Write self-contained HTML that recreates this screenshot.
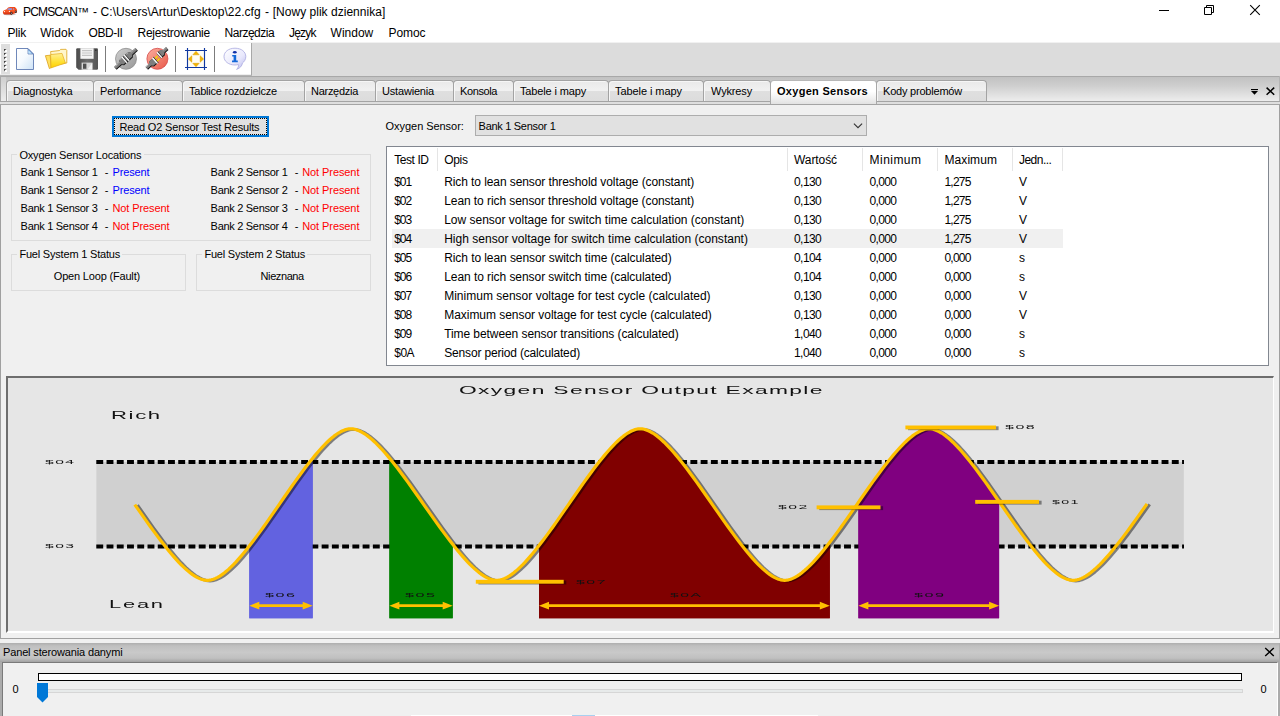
<!DOCTYPE html>
<html><head><meta charset="utf-8">
<style>
*{box-sizing:border-box;margin:0;padding:0}
html,body{width:1280px;height:716px;overflow:hidden;background:#f0f0f0}
body{font-family:"Liberation Sans",sans-serif;font-size:12px;color:#000;position:relative}
.a{position:absolute}
.t{position:absolute;white-space:pre;line-height:16px;height:16px;z-index:3}
.c{color:#111;filter:grayscale(1)}
#title{left:0;top:0;width:1280px;height:22px;background:#fff}
#menu{left:0;top:22px;width:1280px;height:21px;background:#fff}
#tbar{left:0;top:43px;width:1280px;height:33px;background:#dcdcdc}
#tbarw{left:0;top:74.5px;width:252px;height:2px;background:#b4b4b4}
#tabs{left:0;top:76px;width:1280px;height:26px;background:linear-gradient(#a8a8a8 0,#a8a8a8 1px,#c2c2c2 1.5px,#cdcdcd 35%,#efefef 100%)}
.tab{position:absolute;top:80px;height:21px;border:1px solid #a3a3a3;border-bottom:none;border-radius:4px 4px 0 0;background:linear-gradient(#e9e9e9 0,#f1f1f1 48%,#dfdfdf 52%,#dcdcdc 100%);box-shadow:inset 1px 1px 0 #f6f6f6}
.tab.on{top:80px;height:24px;background:linear-gradient(#fff 0,#fff 45%,#f0f0f0 75%,#e2e2e2 100%);border-color:#a8a8a8;border-top-color:#b8b8b8;box-shadow:none;z-index:2}
.hs{top:148px;width:1px;height:23px;background:#e5e5e5}
.grp{position:absolute;border:1px solid #dcdcdc}
</style></head><body>
<!-- title bar -->
<div id="title" class="a"></div>
<svg class="a" style="left:0;top:0" width="22" height="20" viewBox="0 0 22 20">
 <defs><linearGradient id="gcar" x1="0" y1="0" x2="0" y2="1"><stop offset="0" stop-color="#f04818"/><stop offset=".55" stop-color="#f85a28"/><stop offset="1" stop-color="#d02808"/></linearGradient></defs>
 <ellipse cx="9.5" cy="14.5" rx="6.4" ry=".7" fill="#888" opacity=".5"/>
 <path d="M2.9 11.8 C3.1 10.5 5 9.7 6.6 9.3 L8.1 7.4 C9.8 6.9 13.3 6.8 14.8 7.1 C16 7.9 16.9 9 17.1 10.1 L17 12.3 L15.2 13.2 L11.2 14.6 L4.4 14.4 C3.3 14.2 2.8 13.2 2.9 11.8 Z" fill="url(#gcar)"/>
 <path d="M7.1 9.7 L8.4 8.2 L12 8.2 L11.8 9.9 Z" fill="#8a9cf0"/>
 <path d="M13.1 8.2 L14 8.3 L14.2 9.8 L13.2 9.9 Z" fill="#8a9cf0"/>
 <circle cx="4.5" cy="11.6" r=".55" fill="#fff"/><circle cx="9.4" cy="11.4" r=".55" fill="#fff"/>
 <ellipse cx="11.4" cy="13.3" rx="1.05" ry="1.45" fill="#2a1a1a"/><ellipse cx="11.5" cy="13.3" rx=".4" ry=".7" fill="#c8c8c8"/>
 <ellipse cx="15.8" cy="11.7" rx=".95" ry="1.3" fill="#2a1a1a"/><ellipse cx="15.85" cy="11.7" rx=".35" ry=".6" fill="#c8c8c8"/>
</svg>
<!-- window controls -->
<svg class="a" style="left:1150px;top:0" width="130" height="22" viewBox="0 0 130 22">
 <path d="M9 10.5 H19" stroke="#000" stroke-width="1"/>
 <path d="M54.5 7.5 h7 v7 h-7 Z M56.5 7.5 v-2 h7 v7 h-2" fill="none" stroke="#000" stroke-width="1"/>
 <path d="M100.2 5.2 L109.8 14.8 M109.8 5.2 L100.2 14.8" stroke="#000" stroke-width="1.1"/>
</svg>
<div id="menu" class="a"></div>
<div class="a" style="left:0;top:42px;width:1280px;height:1px;background:#f1f1f1"></div>
<!-- toolbar -->
<div id="tbar" class="a"></div>
<div id="tbarw" class="a"></div>
<svg class="a" style="left:0;top:43px" width="253" height="33" viewBox="0 43 253 33">
<defs>
 <linearGradient id="gdoc" x1="0" y1="0" x2="1" y2="1"><stop offset="0" stop-color="#fff"/><stop offset=".45" stop-color="#f6fafe"/><stop offset="1" stop-color="#cde2f6"/></linearGradient>
 <linearGradient id="gfold" x1="0" y1="0" x2="0" y2="1"><stop offset="0" stop-color="#fff098"/><stop offset=".6" stop-color="#ffe030"/><stop offset="1" stop-color="#ffd000"/></linearGradient>
 <linearGradient id="gfold2" x1="0" y1="0" x2="0" y2="1"><stop offset="0" stop-color="#fdf0b0"/><stop offset="1" stop-color="#ecc040"/></linearGradient>
 <linearGradient id="gflop" x1="0" y1="0" x2="1" y2="0"><stop offset="0" stop-color="#4a4a4a"/><stop offset=".5" stop-color="#6e6e6e"/><stop offset="1" stop-color="#555"/></linearGradient>
 <linearGradient id="ggray" x1="0" y1="0" x2="1" y2="1"><stop offset="0" stop-color="#d0d0d0"/><stop offset="1" stop-color="#969696"/></linearGradient>
 <linearGradient id="gred" x1="0" y1="0" x2="1" y2="1"><stop offset="0" stop-color="#fcb0a0"/><stop offset="1" stop-color="#e85848"/></linearGradient>
 <linearGradient id="gbub" x1="0" y1="0" x2="1" y2="1"><stop offset="0" stop-color="#fff"/><stop offset=".6" stop-color="#e8e8fc"/><stop offset="1" stop-color="#b8b8ec"/></linearGradient>
</defs>
<rect x="0" y="43" width="251" height="31.5" fill="#fff"/>
<rect x="251" y="43" width="1" height="32" fill="#a8a8a8"/>
<rect x="1" y="44" width="9" height="30.3" fill="#dedede"/>
<rect x="5" y="50" width="2" height="2" fill="#fff"/><path d="M4 49 H6.3 L4 51.3 Z" fill="#3c3c3c"/><rect x="5" y="54" width="2" height="2" fill="#fff"/><path d="M4 53 H6.3 L4 55.3 Z" fill="#3c3c3c"/><rect x="5" y="58" width="2" height="2" fill="#fff"/><path d="M4 57 H6.3 L4 59.3 Z" fill="#3c3c3c"/><rect x="5" y="62" width="2" height="2" fill="#fff"/><path d="M4 61 H6.3 L4 63.3 Z" fill="#3c3c3c"/><rect x="5" y="66" width="2" height="2" fill="#fff"/><path d="M4 65 H6.3 L4 67.3 Z" fill="#3c3c3c"/><rect x="5" y="70" width="2" height="2" fill="#fff"/><path d="M4 69 H6.3 L4 71.3 Z" fill="#3c3c3c"/>
<!-- new doc -->
<path d="M16.5 48.5 H28 L33.5 54 V69.5 H16.5 Z" fill="url(#gdoc)" stroke="#5f7ab2" stroke-width=".9" stroke-linejoin="miter"/>
<path d="M28 48.8 V54 H33.2 Z" fill="#8cc4f0" stroke="#5a74ac" stroke-width=".7"/>
<path d="M28.4 50.4 V53.6 H31.6 Z" fill="#c8e4fa"/>
<!-- folder -->
<path d="M50.6 51.6 L59.6 50.5 L60.6 49.4 L66 49.3 L66.8 50.2 L66.8 63 L52 66 Z" fill="#fff6cc" stroke="#dca41c" stroke-width=".8" stroke-linejoin="round"/>
<path d="M45.4 55.7 L50.2 55.2 L51.2 67.6 L49.4 68.6 Z" fill="#ffe060" stroke="#dca018" stroke-width=".8" stroke-linejoin="round"/>
<path d="M50.6 54.6 L62 53.4 L65.4 63 L51 67.9 Z" fill="url(#gfold)" stroke="#e4ac20" stroke-width=".7" stroke-linejoin="round"/>
<!-- floppy -->
<path d="M77.4 48.2 H96.8 Q98 48.2 98 49.4 V68.6 Q98 69.8 96.8 69.8 H78.6 L76.2 67.4 V49.4 Q76.2 48.2 77.4 48.2 Z" fill="url(#gflop)"/>
<rect x="80.4" y="48.2" width="13.2" height="10.6" fill="#f4f4f4"/>
<path d="M82 50.6h10M82 53h10M82 55.4h10" stroke="#c4c4c4" stroke-width="1.1"/>
<rect x="81.6" y="62.6" width="10.8" height="7.2" fill="#d8d8d8"/>
<rect x="83" y="63.6" width="3.4" height="5.2" fill="#505050"/>
<path d="M87.4 69.8 L92.4 62.6 V69.8 Z" fill="#fff" opacity=".7"/>
<rect x="95" y="49.4" width="1.6" height="1.6" fill="#333"/>
<!-- separators -->
<rect x="105" y="46" width="1" height="26" fill="#7c7c7c"/>
<rect x="175" y="46" width="1" height="26" fill="#7c7c7c"/>
<rect x="214" y="46" width="1" height="26" fill="#7c7c7c"/>
<!-- gray plug -->
<circle cx="126" cy="58.8" r="10.5" fill="url(#ggray)" stroke="#8c8c8c" stroke-width=".8"/>
<g transform="translate(126 58.8) rotate(-41.5)">
 <path d="M-14.2 -1.7 H-7.2 L-5.6 -3.3 H6 L7.6 -1.7 H14.2 V1.9 H7.6 L6 3.5 H-5.6 L-7.2 1.9 H-14.2 Z" fill="#141414"/>
 <path d="M-14.2 -1.9 H-7.2 L-5.6 -3.5 H6 L7.6 -1.9 H14.2 V0.9 H7.6 L6 2.5 H-5.6 L-7.2 0.9 H-14.2 Z" fill="#7e7e7e"/>
 <path d="M-14 -1.5 H-7.4 M7.8 -1.5 H14" stroke="#d4d4d4" stroke-width=".8" stroke-dasharray="1.2 .7"/>
 <path d="M-5.2 -3 H-3 M3 -3 H5.6" stroke="#b4b4b4" stroke-width=".7"/>
 <rect x="-2.5" y="-4" width="1.35" height="7.6" fill="#fff"/>
 <rect x="0.5" y="-4" width="1.35" height="7.6" fill="#fff"/>
 <rect x="-1.15" y="-4" width=".6" height="7.8" fill="#222"/><rect x="1.85" y="-4" width=".6" height="7.8" fill="#222"/>
</g>
<!-- red plug -->
<circle cx="157.4" cy="58.8" r="10.5" fill="url(#gred)" stroke="#d44848" stroke-width=".8"/>
<g transform="translate(157.4 58.8) rotate(-41.5)">
 <path d="M-14.2 -1.7 H-9.2 L-7.6 -3.3 H-2 V3.5 H-7.6 L-9.2 1.9 H-14.2 Z" fill="#141414"/>
 <path d="M-14.2 -1.9 H-9.2 L-7.6 -3.5 H-2 V2.5 H-7.6 L-9.2 0.9 H-14.2 Z" fill="#7e7e7e"/>
 <path d="M-14 -1.5 H-9.4" stroke="#d4d4d4" stroke-width=".8" stroke-dasharray="1.2 .7"/>
 <rect x="-3.6" y="-4" width="1.4" height="7.6" fill="#fff"/><rect x="-2.2" y="-4" width=".6" height="7.8" fill="#222"/>
 <path d="M-1.4 -2.3 L1.8 -2.7 L1.8 -1.3 L-1.4 -0.9 Z M-1.4 0.9 L1.8 0.5 L1.8 1.9 L-1.4 2.3 Z" fill="#fff000" stroke="#b89000" stroke-width=".3"/>
 <g transform="translate(0 -1.2)">
 <path d="M3 -3.3 H8 L9.6 -1.7 H14.2 V1.9 H9.6 L8 3.5 H3 Z" fill="#141414"/>
 <path d="M3 -3.5 H8 L9.6 -1.9 H14.2 V0.9 H9.6 L8 2.5 H3 Z" fill="#7e7e7e"/>
 <path d="M9.8 -1.5 H14" stroke="#d4d4d4" stroke-width=".8" stroke-dasharray="1.2 .7"/>
 <rect x="3.4" y="-4" width="1.4" height="7.6" fill="#fff"/><rect x="4.8" y="-4" width=".6" height="7.8" fill="#222"/>
 </g>
</g>
<!-- fit -->
<rect x="188" y="51" width="16" height="16" fill="#fffdf4"/>
<path d="M185 50.5 H207 M185 67.5 H207 M187.5 48 V70 M204.5 48 V70" stroke="#1038a0" stroke-width="1.15" fill="none"/>
<g fill="#f4b400" stroke="#d49a00" stroke-width=".5" stroke-linejoin="round"><path d="M196 51.3 L199.2 54.8 H192.8 Z"/><path d="M196 66.8 L199.2 63.3 H192.8 Z"/><path d="M188.4 59 L191.8 55.8 V62.2 Z"/><path d="M203.6 59 L200.2 55.8 V62.2 Z"/></g>
<!-- info bubble -->
<path d="M235 48.2 C241.4 48.2 245.8 51.8 245.8 56.6 C245.8 59.6 244.2 61.6 242.4 63.2 C242 65.8 240.2 68.2 236.6 69.4 C238.2 67.8 238.8 66.2 238.4 64.6 C237.4 64.8 236.2 65 235 65 C228.6 65 224 61.4 224 56.6 C224 51.8 228.6 48.2 235 48.2 Z" fill="url(#gbub)" stroke="#a8a8e0" stroke-width=".8"/>
<ellipse cx="234.8" cy="52.3" rx="1.9" ry="1.3" fill="#1030a8"/>
<path d="M232.2 55 H236.2 V60.6 H237.8 V62.2 H232 V60.6 H233.6 V56.6 H232.2 Z" fill="#1468d8"/>
</svg>

<!-- tab strip -->
<div id="tabs" class="a"></div>
<div class="a" style="left:0;top:77px;width:1px;height:28px;background:#a8a8a8"></div>
<div class="a" style="left:1px;top:77px;width:5px;height:24px;background:linear-gradient(#cfcfcf,#ececec)"></div>
<div class="tab" style="left:6.0px;width:88.0px"></div>
<div class="tab" style="left:93.0px;width:90.0px"></div>
<div class="tab" style="left:182.0px;width:123.0px"></div>
<div class="tab" style="left:304.0px;width:72.0px"></div>
<div class="tab" style="left:375.0px;width:79.0px"></div>
<div class="tab" style="left:453.0px;width:61.0px"></div>
<div class="tab" style="left:513.0px;width:96.0px"></div>
<div class="tab" style="left:608.0px;width:96.0px"></div>
<div class="tab" style="left:703.0px;width:68.0px"></div>
<div class="tab on" style="left:770.0px;width:107.0px"></div>
<div class="tab" style="left:876.0px;width:111.0px"></div>
<svg class="a" style="left:1246px;top:84px" width="32" height="14" viewBox="1246 84 32 14">
<rect x="1251" y="89" width="7" height="1.1" fill="#000"/><path d="M1251 91 H1258 L1254.5 94.8 Z" fill="#000"/>
<path d="M1266.6 87.6 L1274.2 94.8 M1274.2 87.6 L1266.6 94.8" stroke="#000" stroke-width="1.5"/>
</svg>
<div class="a" style="left:1279px;top:76px;width:1px;height:29px;background:#b4b4b4"></div>

<!-- content frame -->
<div class="a" style="left:0;top:101px;width:1280px;height:1px;background:#a4a4a4"></div>
<div class="a" style="left:0;top:102px;width:1280px;height:2px;background:#dedede"></div>
<div class="a" style="left:0;top:104px;width:1280px;height:535px;border-top:1px solid #a4a4a4;background:#f0f0f0;border-left:1px solid #a0a0a0;border-right:1px solid #a0a0a0;border-bottom:1px solid #a0a0a0"></div>
<div class="a" style="left:0;top:639px;width:1280px;height:5px;background:#f0f0f0"></div>
<!-- button -->
<div class="a" style="left:112px;top:116px;width:157px;height:21px;background:#e1e1e1;border:2px solid #0078d7"></div>
<div class="a" style="left:114px;top:118px;width:153px;height:17px;border:1px dotted #000"></div>
<!-- group boxes -->
<div class="grp" style="left:11px;top:154px;width:360px;height:87px"></div>
<div class="a" style="left:17px;top:150px;width:127px;height:10px;background:#f0f0f0"></div>
<div class="grp" style="left:11px;top:254px;width:175px;height:37px"></div>
<div class="a" style="left:17px;top:249px;width:105px;height:10px;background:#f0f0f0"></div>
<div class="grp" style="left:196px;top:254px;width:175px;height:37px"></div>
<div class="a" style="left:202px;top:249px;width:105px;height:10px;background:#f0f0f0"></div>
<!-- combo -->
<div class="a" style="left:475px;top:115px;width:392px;height:21px;background:#e1e1e1;border:1px solid #adadad"></div>
<svg class="a" style="left:851px;top:121px" width="12" height="10" viewBox="0 0 12 10"><path d="M2.9 2.6 L7 6.7 L11.1 2.6" fill="none" stroke="#333" stroke-width="1.1"/></svg>
<!-- list view -->
<div class="a" style="left:386px;top:146px;width:883px;height:220px;background:#fff;border:1px solid #828790"></div>
<div class="a" style="left:392px;top:229px;width:671px;height:19px;background:#f0f0f0"></div>
<div class="a hs" style="left:437px"></div><div class="a hs" style="left:787px"></div><div class="a hs" style="left:862px"></div>
<div class="a hs" style="left:937px"></div><div class="a hs" style="left:1012px"></div><div class="a hs" style="left:1062px"></div>

<!-- chart panel -->
<div class="a" style="left:6px;top:376px;width:1268px;height:257px;background:#e6e6e6;border-top:2px solid #6e6e6e;border-left:2px solid #6e6e6e;border-right:1px solid #fff;border-bottom:2px solid #fff"></div>

<svg class="a" style="left:8px;top:378px" width="1264" height="252" viewBox="0 0 1264 252"><rect x="88.4" y="84" width="1087.3999999999999" height="85" fill="#d0d0d0"/>
<polygon points="241.30,168.08 242.65,166.35 245.18,163.02 247.73,159.61 250.29,156.13 252.87,152.58 255.45,148.97 258.05,145.31 260.65,141.61 263.26,137.87 265.87,134.11 268.48,130.34 271.10,126.55 273.72,122.76 276.33,118.99 278.94,115.23 281.55,111.49 284.15,107.79 286.75,104.13 289.33,100.52 291.91,96.97 294.47,93.49 297.02,90.08 299.55,86.75 302.07,83.52 304.57,80.39 304.70,80.23 304.70,240.30 241.30,240.30" fill="#6262e0"/>
<polygon points="381.40,80.04 381.70,80.39 384.24,83.52 386.80,86.75 389.38,90.08 391.97,93.49 394.58,96.97 397.20,100.52 399.83,104.13 402.47,107.79 405.12,111.49 407.77,115.23 410.43,118.99 413.09,122.76 415.75,126.55 418.41,130.34 421.07,134.11 423.73,137.87 426.38,141.61 429.03,145.31 431.67,148.97 434.30,152.58 436.92,156.13 439.53,159.61 442.12,163.02 444.70,166.35 444.70,166.35 444.70,240.30 381.40,240.30" fill="#008000"/>
<polygon points="531.00,167.60 531.98,166.35 534.51,163.02 537.06,159.61 539.63,156.13 542.20,152.58 544.79,148.97 547.39,145.31 549.99,141.61 552.60,137.87 555.21,134.11 557.83,130.34 560.45,126.55 563.07,122.76 565.69,118.99 568.30,115.23 570.91,111.49 573.51,107.79 576.11,104.13 578.70,100.52 581.27,96.97 583.84,93.49 586.39,90.08 588.92,86.75 591.44,83.52 593.94,80.39 596.42,77.37 598.88,74.47 601.32,71.70 603.73,69.05 606.12,66.56 608.48,64.21 610.81,62.02 613.11,60.00 615.38,58.16 617.61,56.51 619.81,55.04 621.98,53.78 624.10,52.73 626.19,51.90 628.24,51.29 630.24,50.92 632.20,50.80 634.17,50.92 636.19,51.29 638.25,51.90 640.35,52.73 642.49,53.78 644.66,55.04 646.88,56.51 649.13,58.16 651.41,60.00 653.73,62.02 656.07,64.21 658.45,66.56 660.85,69.05 663.28,71.70 665.73,74.47 668.20,77.37 670.70,80.39 673.22,83.52 675.75,86.75 678.30,90.08 680.87,93.49 683.45,96.97 686.04,100.52 688.64,104.13 691.26,107.79 693.88,111.49 696.50,115.23 699.13,118.99 701.76,122.76 704.40,126.55 707.04,130.34 709.67,134.11 712.30,137.87 714.92,141.61 717.54,145.31 720.16,148.97 722.76,152.58 725.35,156.13 727.93,159.61 730.50,163.02 733.05,166.35 735.58,169.58 738.10,172.71 740.60,175.73 743.07,178.63 745.52,181.40 747.95,184.05 750.35,186.54 752.73,188.89 755.07,191.08 757.39,193.10 759.67,194.94 761.92,196.59 764.14,198.06 766.31,199.32 768.45,200.37 770.55,201.20 772.61,201.81 774.63,202.18 776.60,202.30 778.57,202.18 780.59,201.81 782.65,201.20 784.75,200.37 786.89,199.32 789.07,198.06 791.29,196.59 793.54,194.94 795.82,193.10 798.14,191.08 800.49,188.89 802.86,186.54 805.27,184.05 807.70,181.40 810.15,178.63 812.63,175.73 815.13,172.71 817.64,169.58 820.18,166.35 821.80,164.24 821.80,240.30 531.00,240.30" fill="#800000"/>
<polygon points="850.40,124.32 851.49,122.76 854.12,118.99 856.75,115.23 859.38,111.49 862.00,107.79 864.62,104.13 867.22,100.52 869.82,96.97 872.40,93.49 874.97,90.08 877.52,86.75 880.06,83.52 882.57,80.39 885.07,77.37 887.55,74.47 890.00,71.70 892.43,69.05 894.84,66.56 897.21,64.21 899.56,62.02 901.88,60.00 904.16,58.16 906.41,56.51 908.63,55.04 910.81,53.78 912.95,52.73 915.05,51.90 917.11,51.29 919.13,50.92 921.10,50.80 923.07,50.92 925.08,51.29 927.13,51.90 929.22,52.73 931.36,53.78 933.53,55.04 935.74,56.51 937.98,58.16 940.26,60.00 942.57,62.02 944.91,64.21 947.27,66.56 949.67,69.05 952.09,71.70 954.53,74.47 957.00,77.37 959.49,80.39 962.00,83.52 964.53,86.75 967.07,90.08 969.63,93.49 972.21,96.97 974.79,100.52 977.39,104.13 979.99,107.79 982.60,111.49 985.22,115.23 987.85,118.99 990.47,122.76 991.10,123.67 991.10,240.30 850.40,240.30" fill="#800080"/>
<line x1="88.3" y1="84.10000000000002" x2="1176" y2="84.10000000000002" stroke="#000" stroke-width="4" stroke-dasharray="6.9 3.343"/>
<line x1="88.3" y1="168.60000000000002" x2="1176" y2="168.60000000000002" stroke="#000" stroke-width="4" stroke-dasharray="6.9 3.343"/>
<polygon points="241.30,168.08 242.65,166.35 245.18,163.02 247.73,159.61 250.29,156.13 252.87,152.58 255.45,148.97 258.05,145.31 260.65,141.61 263.26,137.87 265.87,134.11 268.48,130.34 271.10,126.55 273.72,122.76 276.33,118.99 278.94,115.23 281.55,111.49 284.15,107.79 286.75,104.13 289.33,100.52 291.91,96.97 294.47,93.49 297.02,90.08 299.55,86.75 302.07,83.52 304.57,80.39 304.70,80.23 304.70,240.30 241.30,240.30" fill="#6262e0"/>
<polygon points="381.40,80.04 381.70,80.39 384.24,83.52 386.80,86.75 389.38,90.08 391.97,93.49 394.58,96.97 397.20,100.52 399.83,104.13 402.47,107.79 405.12,111.49 407.77,115.23 410.43,118.99 413.09,122.76 415.75,126.55 418.41,130.34 421.07,134.11 423.73,137.87 426.38,141.61 429.03,145.31 431.67,148.97 434.30,152.58 436.92,156.13 439.53,159.61 442.12,163.02 444.70,166.35 444.70,166.35 444.70,240.30 381.40,240.30" fill="#008000"/>
<polygon points="531.00,167.60 531.98,166.35 534.51,163.02 537.06,159.61 539.63,156.13 542.20,152.58 544.79,148.97 547.39,145.31 549.99,141.61 552.60,137.87 555.21,134.11 557.83,130.34 560.45,126.55 563.07,122.76 565.69,118.99 568.30,115.23 570.91,111.49 573.51,107.79 576.11,104.13 578.70,100.52 581.27,96.97 583.84,93.49 586.39,90.08 588.92,86.75 591.44,83.52 593.94,80.39 596.42,77.37 598.88,74.47 601.32,71.70 603.73,69.05 606.12,66.56 608.48,64.21 610.81,62.02 613.11,60.00 615.38,58.16 617.61,56.51 619.81,55.04 621.98,53.78 624.10,52.73 626.19,51.90 628.24,51.29 630.24,50.92 632.20,50.80 634.17,50.92 636.19,51.29 638.25,51.90 640.35,52.73 642.49,53.78 644.66,55.04 646.88,56.51 649.13,58.16 651.41,60.00 653.73,62.02 656.07,64.21 658.45,66.56 660.85,69.05 663.28,71.70 665.73,74.47 668.20,77.37 670.70,80.39 673.22,83.52 675.75,86.75 678.30,90.08 680.87,93.49 683.45,96.97 686.04,100.52 688.64,104.13 691.26,107.79 693.88,111.49 696.50,115.23 699.13,118.99 701.76,122.76 704.40,126.55 707.04,130.34 709.67,134.11 712.30,137.87 714.92,141.61 717.54,145.31 720.16,148.97 722.76,152.58 725.35,156.13 727.93,159.61 730.50,163.02 733.05,166.35 735.58,169.58 738.10,172.71 740.60,175.73 743.07,178.63 745.52,181.40 747.95,184.05 750.35,186.54 752.73,188.89 755.07,191.08 757.39,193.10 759.67,194.94 761.92,196.59 764.14,198.06 766.31,199.32 768.45,200.37 770.55,201.20 772.61,201.81 774.63,202.18 776.60,202.30 778.57,202.18 780.59,201.81 782.65,201.20 784.75,200.37 786.89,199.32 789.07,198.06 791.29,196.59 793.54,194.94 795.82,193.10 798.14,191.08 800.49,188.89 802.86,186.54 805.27,184.05 807.70,181.40 810.15,178.63 812.63,175.73 815.13,172.71 817.64,169.58 820.18,166.35 821.80,164.24 821.80,240.30 531.00,240.30" fill="#800000"/>
<polygon points="850.40,124.32 851.49,122.76 854.12,118.99 856.75,115.23 859.38,111.49 862.00,107.79 864.62,104.13 867.22,100.52 869.82,96.97 872.40,93.49 874.97,90.08 877.52,86.75 880.06,83.52 882.57,80.39 885.07,77.37 887.55,74.47 890.00,71.70 892.43,69.05 894.84,66.56 897.21,64.21 899.56,62.02 901.88,60.00 904.16,58.16 906.41,56.51 908.63,55.04 910.81,53.78 912.95,52.73 915.05,51.90 917.11,51.29 919.13,50.92 921.10,50.80 923.07,50.92 925.08,51.29 927.13,51.90 929.22,52.73 931.36,53.78 933.53,55.04 935.74,56.51 937.98,58.16 940.26,60.00 942.57,62.02 944.91,64.21 947.27,66.56 949.67,69.05 952.09,71.70 954.53,74.47 957.00,77.37 959.49,80.39 962.00,83.52 964.53,86.75 967.07,90.08 969.63,93.49 972.21,96.97 974.79,100.52 977.39,104.13 979.99,107.79 982.60,111.49 985.22,115.23 987.85,118.99 990.47,122.76 991.10,123.67 991.10,240.30 850.40,240.30" fill="#800080"/>
<polyline points="129.50,127.15 132.15,130.94 134.80,134.71 137.44,138.47 140.08,142.21 142.72,145.91 145.34,149.57 147.96,153.18 150.57,156.73 153.16,160.21 155.74,163.62 158.31,166.95 160.86,170.18 163.39,173.31 165.90,176.33 168.39,179.23 170.85,182.00 173.29,184.65 175.71,187.14 178.10,189.49 180.45,191.68 182.78,193.70 185.08,195.54 187.34,197.19 189.57,198.66 191.76,199.92 193.91,200.97 196.02,201.80 198.09,202.41 200.12,202.78 202.10,202.90 204.06,202.78 206.06,202.41 208.11,201.80 210.19,200.97 212.32,199.92 214.48,198.66 216.68,197.19 218.91,195.54 221.18,193.70 223.48,191.68 225.81,189.49 228.16,187.14 230.55,184.65 232.96,182.00 235.40,179.23 237.85,176.33 240.33,173.31 242.83,170.18 245.35,166.95 247.88,163.62 250.43,160.21 252.99,156.73 255.57,153.18 258.15,149.57 260.75,145.91 263.35,142.21 265.96,138.47 268.57,134.71 271.18,130.94 273.80,127.15 276.42,123.36 279.03,119.59 281.64,115.83 284.25,112.09 286.85,108.39 289.45,104.73 292.03,101.12 294.61,97.57 297.17,94.09 299.72,90.68 302.25,87.35 304.77,84.12 307.27,80.99 309.75,77.97 312.20,75.07 314.64,72.30 317.05,69.65 319.44,67.16 321.79,64.81 324.12,62.62 326.42,60.60 328.69,58.76 330.92,57.11 333.12,55.64 335.28,54.38 337.41,53.33 339.49,52.50 341.54,51.89 343.54,51.52 345.50,51.40 347.49,51.52 349.53,51.89 351.61,52.50 353.73,53.33 355.89,54.38 358.09,55.64 360.33,57.11 362.60,58.76 364.91,60.60 367.25,62.62 369.62,64.81 372.02,67.16 374.45,69.65 376.90,72.30 379.38,75.07 381.88,77.97 384.40,80.99 386.94,84.12 389.50,87.35 392.08,90.68 394.67,94.09 397.28,97.57 399.90,101.12 402.53,104.73 405.17,108.39 407.82,112.09 410.47,115.83 413.13,119.59 415.79,123.36 418.45,127.15 421.11,130.94 423.77,134.71 426.43,138.47 429.08,142.21 431.73,145.91 434.37,149.57 437.00,153.18 439.62,156.73 442.23,160.21 444.82,163.62 447.40,166.95 449.96,170.18 452.50,173.31 455.02,176.33 457.52,179.23 460.00,182.00 462.45,184.65 464.88,187.14 467.28,189.49 469.65,191.68 471.99,193.70 474.30,195.54 476.57,197.19 478.81,198.66 481.01,199.92 483.17,200.97 485.29,201.80 487.37,202.41 489.41,202.78 491.40,202.90 493.36,202.78 495.36,202.41 497.41,201.80 499.50,200.97 501.62,199.92 503.79,198.66 505.99,197.19 508.22,195.54 510.49,193.70 512.79,191.68 515.12,189.49 517.48,187.14 519.87,184.65 522.28,182.00 524.72,179.23 527.18,176.33 529.66,173.31 532.16,170.18 534.68,166.95 537.21,163.62 539.76,160.21 542.33,156.73 544.90,153.18 547.49,149.57 550.09,145.91 552.69,142.21 555.30,138.47 557.91,134.71 560.53,130.94 563.15,127.15 565.77,123.36 568.39,119.59 571.00,115.83 573.61,112.09 576.21,108.39 578.81,104.73 581.40,101.12 583.97,97.57 586.54,94.09 589.09,90.68 591.62,87.35 594.14,84.12 596.64,80.99 599.12,77.97 601.58,75.07 604.02,72.30 606.43,69.65 608.82,67.16 611.18,64.81 613.51,62.62 615.81,60.60 618.08,58.76 620.31,57.11 622.51,55.64 624.68,54.38 626.80,53.33 628.89,52.50 630.94,51.89 632.94,51.52 634.90,51.40 636.87,51.52 638.89,51.89 640.95,52.50 643.05,53.33 645.19,54.38 647.36,55.64 649.58,57.11 651.83,58.76 654.11,60.60 656.43,62.62 658.77,64.81 661.15,67.16 663.55,69.65 665.98,72.30 668.43,75.07 670.90,77.97 673.40,80.99 675.92,84.12 678.45,87.35 681.00,90.68 683.57,94.09 686.15,97.57 688.74,101.12 691.34,104.73 693.96,108.39 696.58,112.09 699.20,115.83 701.83,119.59 704.46,123.36 707.10,127.15 709.74,130.94 712.37,134.71 715.00,138.47 717.62,142.21 720.24,145.91 722.86,149.57 725.46,153.18 728.05,156.73 730.63,160.21 733.20,163.62 735.75,166.95 738.28,170.18 740.80,173.31 743.30,176.33 745.77,179.23 748.22,182.00 750.65,184.65 753.05,187.14 755.43,189.49 757.77,191.68 760.09,193.70 762.37,195.54 764.62,197.19 766.84,198.66 769.01,199.92 771.15,200.97 773.25,201.80 775.31,202.41 777.33,202.78 779.30,202.90 781.27,202.78 783.29,202.41 785.35,201.80 787.45,200.97 789.59,199.92 791.77,198.66 793.99,197.19 796.24,195.54 798.52,193.70 800.84,191.68 803.19,189.49 805.56,187.14 807.97,184.65 810.40,182.00 812.85,179.23 815.33,176.33 817.83,173.31 820.34,170.18 822.88,166.95 825.43,163.62 828.00,160.21 830.58,156.73 833.18,153.18 835.78,149.57 838.40,145.91 841.02,142.21 843.65,138.47 846.28,134.71 848.91,130.94 851.55,127.15 854.19,123.36 856.82,119.59 859.45,115.83 862.08,112.09 864.70,108.39 867.32,104.73 869.92,101.12 872.52,97.57 875.10,94.09 877.67,90.68 880.22,87.35 882.76,84.12 885.27,80.99 887.77,77.97 890.25,75.07 892.70,72.30 895.13,69.65 897.54,67.16 899.91,64.81 902.26,62.62 904.58,60.60 906.86,58.76 909.11,57.11 911.33,55.64 913.51,54.38 915.65,53.33 917.75,52.50 919.81,51.89 921.83,51.52 923.80,51.40 925.77,51.52 927.78,51.89 929.83,52.50 931.92,53.33 934.06,54.38 936.23,55.64 938.44,57.11 940.68,58.76 942.96,60.60 945.27,62.62 947.61,64.81 949.97,67.16 952.37,69.65 954.79,72.30 957.24,75.07 959.70,77.97 962.19,80.99 964.70,84.12 967.23,87.35 969.77,90.68 972.33,94.09 974.91,97.57 977.49,101.12 980.09,104.73 982.69,108.39 985.30,112.09 987.92,115.83 990.55,119.59 993.17,123.36 995.80,127.15 998.43,130.94 1001.05,134.71 1003.68,138.47 1006.30,142.21 1008.91,145.91 1011.51,149.57 1014.11,153.18 1016.69,156.73 1019.27,160.21 1021.83,163.62 1024.37,166.95 1026.90,170.18 1029.41,173.31 1031.90,176.33 1034.37,179.23 1036.81,182.00 1039.23,184.65 1041.63,187.14 1043.99,189.49 1046.33,191.68 1048.64,193.70 1050.92,195.54 1053.16,197.19 1055.37,198.66 1057.54,199.92 1059.68,200.97 1061.77,201.80 1063.82,202.41 1065.83,202.78 1067.80,202.90 1069.80,202.78 1071.85,202.41 1073.95,201.80 1076.08,200.97 1078.26,199.92 1080.47,198.66 1082.72,197.19 1085.01,195.54 1087.33,193.70 1089.68,191.68 1092.07,189.49 1094.48,187.14 1096.92,184.65 1099.39,182.00 1101.89,179.23 1104.40,176.33 1106.94,173.31 1109.50,170.18 1112.07,166.95 1114.67,163.62 1117.28,160.21 1119.90,156.73 1122.53,153.18 1125.18,149.57 1127.84,145.91 1130.50,142.21 1133.17,138.47 1135.84,134.71 1138.52,130.94 1141.20,127.15 1141.70,126.44" fill="none" stroke="#000" stroke-opacity="0.45" stroke-width="3.0" stroke-linejoin="round"/>
<polyline points="126.80,126.55 129.45,130.34 132.10,134.11 134.74,137.87 137.38,141.61 140.02,145.31 142.64,148.97 145.26,152.58 147.87,156.13 150.46,159.61 153.04,163.02 155.61,166.35 158.16,169.58 160.69,172.71 163.20,175.73 165.69,178.63 168.15,181.40 170.59,184.05 173.01,186.54 175.40,188.89 177.75,191.08 180.08,193.10 182.38,194.94 184.64,196.59 186.87,198.06 189.06,199.32 191.21,200.37 193.32,201.20 195.39,201.81 197.42,202.18 199.40,202.30 201.36,202.18 203.36,201.81 205.41,201.20 207.49,200.37 209.62,199.32 211.78,198.06 213.98,196.59 216.21,194.94 218.48,193.10 220.78,191.08 223.11,188.89 225.46,186.54 227.85,184.05 230.26,181.40 232.70,178.63 235.15,175.73 237.63,172.71 240.13,169.58 242.65,166.35 245.18,163.02 247.73,159.61 250.29,156.13 252.87,152.58 255.45,148.97 258.05,145.31 260.65,141.61 263.26,137.87 265.87,134.11 268.48,130.34 271.10,126.55 273.72,122.76 276.33,118.99 278.94,115.23 281.55,111.49 284.15,107.79 286.75,104.13 289.33,100.52 291.91,96.97 294.47,93.49 297.02,90.08 299.55,86.75 302.07,83.52 304.57,80.39 307.05,77.37 309.50,74.47 311.94,71.70 314.35,69.05 316.74,66.56 319.09,64.21 321.42,62.02 323.72,60.00 325.99,58.16 328.22,56.51 330.42,55.04 332.58,53.78 334.71,52.73 336.79,51.90 338.84,51.29 340.84,50.92 342.80,50.80 344.79,50.92 346.83,51.29 348.91,51.90 351.03,52.73 353.19,53.78 355.39,55.04 357.63,56.51 359.90,58.16 362.21,60.00 364.55,62.02 366.92,64.21 369.32,66.56 371.75,69.05 374.20,71.70 376.68,74.47 379.18,77.37 381.70,80.39 384.24,83.52 386.80,86.75 389.38,90.08 391.97,93.49 394.58,96.97 397.20,100.52 399.83,104.13 402.47,107.79 405.12,111.49 407.77,115.23 410.43,118.99 413.09,122.76 415.75,126.55 418.41,130.34 421.07,134.11 423.73,137.87 426.38,141.61 429.03,145.31 431.67,148.97 434.30,152.58 436.92,156.13 439.53,159.61 442.12,163.02 444.70,166.35 447.26,169.58 449.80,172.71 452.32,175.73 454.82,178.63 457.30,181.40 459.75,184.05 462.18,186.54 464.58,188.89 466.95,191.08 469.29,193.10 471.60,194.94 473.87,196.59 476.11,198.06 478.31,199.32 480.47,200.37 482.59,201.20 484.67,201.81 486.71,202.18 488.70,202.30 490.66,202.18 492.66,201.81 494.71,201.20 496.80,200.37 498.92,199.32 501.09,198.06 503.29,196.59 505.52,194.94 507.79,193.10 510.09,191.08 512.42,188.89 514.78,186.54 517.17,184.05 519.58,181.40 522.02,178.63 524.48,175.73 526.96,172.71 529.46,169.58 531.98,166.35 534.51,163.02 537.06,159.61 539.63,156.13 542.20,152.58 544.79,148.97 547.39,145.31 549.99,141.61 552.60,137.87 555.21,134.11 557.83,130.34 560.45,126.55 563.07,122.76 565.69,118.99 568.30,115.23 570.91,111.49 573.51,107.79 576.11,104.13 578.70,100.52 581.27,96.97 583.84,93.49 586.39,90.08 588.92,86.75 591.44,83.52 593.94,80.39 596.42,77.37 598.88,74.47 601.32,71.70 603.73,69.05 606.12,66.56 608.48,64.21 610.81,62.02 613.11,60.00 615.38,58.16 617.61,56.51 619.81,55.04 621.98,53.78 624.10,52.73 626.19,51.90 628.24,51.29 630.24,50.92 632.20,50.80 634.17,50.92 636.19,51.29 638.25,51.90 640.35,52.73 642.49,53.78 644.66,55.04 646.88,56.51 649.13,58.16 651.41,60.00 653.73,62.02 656.07,64.21 658.45,66.56 660.85,69.05 663.28,71.70 665.73,74.47 668.20,77.37 670.70,80.39 673.22,83.52 675.75,86.75 678.30,90.08 680.87,93.49 683.45,96.97 686.04,100.52 688.64,104.13 691.26,107.79 693.88,111.49 696.50,115.23 699.13,118.99 701.76,122.76 704.40,126.55 707.04,130.34 709.67,134.11 712.30,137.87 714.92,141.61 717.54,145.31 720.16,148.97 722.76,152.58 725.35,156.13 727.93,159.61 730.50,163.02 733.05,166.35 735.58,169.58 738.10,172.71 740.60,175.73 743.07,178.63 745.52,181.40 747.95,184.05 750.35,186.54 752.73,188.89 755.07,191.08 757.39,193.10 759.67,194.94 761.92,196.59 764.14,198.06 766.31,199.32 768.45,200.37 770.55,201.20 772.61,201.81 774.63,202.18 776.60,202.30 778.57,202.18 780.59,201.81 782.65,201.20 784.75,200.37 786.89,199.32 789.07,198.06 791.29,196.59 793.54,194.94 795.82,193.10 798.14,191.08 800.49,188.89 802.86,186.54 805.27,184.05 807.70,181.40 810.15,178.63 812.63,175.73 815.13,172.71 817.64,169.58 820.18,166.35 822.73,163.02 825.30,159.61 827.88,156.13 830.48,152.58 833.08,148.97 835.70,145.31 838.32,141.61 840.95,137.87 843.58,134.11 846.21,130.34 848.85,126.55 851.49,122.76 854.12,118.99 856.75,115.23 859.38,111.49 862.00,107.79 864.62,104.13 867.22,100.52 869.82,96.97 872.40,93.49 874.97,90.08 877.52,86.75 880.06,83.52 882.57,80.39 885.07,77.37 887.55,74.47 890.00,71.70 892.43,69.05 894.84,66.56 897.21,64.21 899.56,62.02 901.88,60.00 904.16,58.16 906.41,56.51 908.63,55.04 910.81,53.78 912.95,52.73 915.05,51.90 917.11,51.29 919.13,50.92 921.10,50.80 923.07,50.92 925.08,51.29 927.13,51.90 929.22,52.73 931.36,53.78 933.53,55.04 935.74,56.51 937.98,58.16 940.26,60.00 942.57,62.02 944.91,64.21 947.27,66.56 949.67,69.05 952.09,71.70 954.53,74.47 957.00,77.37 959.49,80.39 962.00,83.52 964.53,86.75 967.07,90.08 969.63,93.49 972.21,96.97 974.79,100.52 977.39,104.13 979.99,107.79 982.60,111.49 985.22,115.23 987.85,118.99 990.47,122.76 993.10,126.55 995.73,130.34 998.35,134.11 1000.98,137.87 1003.60,141.61 1006.21,145.31 1008.81,148.97 1011.41,152.58 1013.99,156.13 1016.57,159.61 1019.13,163.02 1021.67,166.35 1024.20,169.58 1026.71,172.71 1029.20,175.73 1031.66,178.63 1034.11,181.40 1036.53,184.05 1038.93,186.54 1041.29,188.89 1043.63,191.08 1045.94,193.10 1048.22,194.94 1050.46,196.59 1052.67,198.06 1054.84,199.32 1056.98,200.37 1059.07,201.20 1061.12,201.81 1063.13,202.18 1065.10,202.30 1067.10,202.18 1069.15,201.81 1071.25,201.20 1073.38,200.37 1075.56,199.32 1077.77,198.06 1080.02,196.59 1082.31,194.94 1084.63,193.10 1086.98,191.08 1089.37,188.89 1091.78,186.54 1094.22,184.05 1096.69,181.40 1099.19,178.63 1101.70,175.73 1104.24,172.71 1106.80,169.58 1109.37,166.35 1111.97,163.02 1114.58,159.61 1117.20,156.13 1119.83,152.58 1122.48,148.97 1125.14,145.31 1127.80,141.61 1130.47,137.87 1133.14,134.11 1135.82,130.34 1138.50,126.55 1139.00,125.84" fill="none" stroke="#ffc000" stroke-width="3.2" stroke-linejoin="round"/>
<rect x="470.4" y="202.6" width="87.9" height="3.9" fill="#000" fill-opacity=".42"/><rect x="467.8" y="201.8" width="87.9" height="3.9" fill="#ffc000"/>
<rect x="811.2" y="128.2" width="63.9" height="3.9" fill="#000" fill-opacity=".42"/><rect x="808.6" y="127.4" width="63.9" height="3.9" fill="#ffc000"/>
<rect x="969.8" y="122.7" width="63.8" height="3.9" fill="#000" fill-opacity=".42"/><rect x="967.2" y="121.9" width="63.8" height="3.9" fill="#ffc000"/>
<rect x="900.0" y="48.3" width="90.6" height="3.9" fill="#000" fill-opacity=".42"/><rect x="897.4" y="47.5" width="90.6" height="3.9" fill="#ffc000"/>
<line x1="247.3" y1="227.7" x2="298.7" y2="227.7" stroke="#ffc000" stroke-width="2.8"/><polygon points="304.7,227.7 294.7,223.8 294.7,231.6" fill="#ffc000"/><polygon points="241.3,227.7 251.3,223.8 251.3,231.6" fill="#ffc000"/>
<line x1="387.4" y1="227.7" x2="438.7" y2="227.7" stroke="#ffc000" stroke-width="2.8"/><polygon points="444.7,227.7 434.7,223.8 434.7,231.6" fill="#ffc000"/><polygon points="381.4,227.7 391.4,223.8 391.4,231.6" fill="#ffc000"/>
<line x1="537.0" y1="227.7" x2="815.8" y2="227.7" stroke="#ffc000" stroke-width="2.8"/><polygon points="821.8,227.7 811.8,223.8 811.8,231.6" fill="#ffc000"/><polygon points="531.0,227.7 541.0,223.8 541.0,231.6" fill="#ffc000"/>
<line x1="856.4" y1="227.7" x2="985.1" y2="227.7" stroke="#ffc000" stroke-width="2.8"/><polygon points="991.1,227.7 981.1,223.8 981.1,231.6" fill="#ffc000"/><polygon points="850.4,227.7 860.4,223.8 860.4,231.6" fill="#ffc000"/></svg>
<!-- bottom panel -->
<div class="a" style="left:0;top:643px;width:1280px;height:73px;background:#ababab"></div>
<div class="a" style="left:0;top:643px;width:1279px;height:19px;background:linear-gradient(#aeaeae 0,#c0c0c0 16%,#c9c9c9 50%,#c0c0c0 80%,#a2a2a2 100%)"></div>
<svg class="a" style="left:1264px;top:647px" width="11" height="10" viewBox="0 0 11 10"><path d="M1.2 1 L9.8 9 M9.8 1 L1.2 9" stroke="#000" stroke-width="1.4"/></svg>
<div class="a" style="left:2px;top:662px;width:1276px;height:54px;background:#f0f0f0;border-left:1px solid #7a7a7a;border-top:1px solid #7a7a7a;border-right:1px solid #fff"></div>
<div class="a" style="left:38px;top:673px;width:1204px;height:8px;background:#fff;border:1px solid #000"></div>
<div class="a" style="left:42px;top:689px;width:1201px;height:4px;background:#e7eaea;border:1px solid #d6d6d6"></div>
<svg class="a" style="left:37px;top:683px" width="11" height="20" viewBox="0 0 11 20"><path d="M0 0 H11 V14 L5.5 19.5 L0 14 Z" fill="#0078d7"/></svg>
<div class="a" style="left:411px;top:714.6px;width:407px;height:2px;background:#fff"></div>
<div class="a" style="left:572px;top:714.6px;width:23px;height:2px;background:#a8d0f0"></div>

<span class="t" style="left:23.10px;top:3.84px;letter-spacing:-0.877px;">PCMSCAN™</span>
<span class="t" style="left:93.00px;top:3.84px;">-</span>
<span class="t" style="left:100.60px;top:3.84px;letter-spacing:0.021px;">C:\Users\Artur\Desktop\22.cfg</span>
<span class="t" style="left:265.00px;top:3.84px;">-</span>
<span class="t" style="left:272.70px;top:3.84px;letter-spacing:0.026px;">[Nowy plik dziennika]</span>
<span class="t" style="left:7.50px;top:24.84px;letter-spacing:-0.211px;">Plik</span>
<span class="t" style="left:40.25px;top:24.84px;letter-spacing:0.031px;">Widok</span>
<span class="t" style="left:88.50px;top:24.84px;letter-spacing:-0.445px;">OBD-II</span>
<span class="t" style="left:137.50px;top:24.84px;letter-spacing:-0.281px;">Rejestrowanie</span>
<span class="t" style="left:224.50px;top:24.84px;letter-spacing:-0.481px;">Narzędzia</span>
<span class="t" style="left:289.00px;top:24.84px;letter-spacing:-0.777px;">Język</span>
<span class="t" style="left:330.60px;top:24.84px;letter-spacing:0.002px;">Window</span>
<span class="t" style="left:388.60px;top:24.84px;letter-spacing:-0.112px;">Pomoc</span>
<span class="t" style="left:13.00px;top:83.19px;font-size:11px;letter-spacing:-0.095px;">Diagnostyka</span>
<span class="t" style="left:100.00px;top:83.19px;font-size:11px;letter-spacing:-0.180px;">Performance</span>
<span class="t" style="left:189.00px;top:83.19px;font-size:11px;letter-spacing:-0.228px;">Tablice rozdzielcze</span>
<span class="t" style="left:311.00px;top:83.19px;font-size:11px;letter-spacing:-0.281px;">Narzędzia</span>
<span class="t" style="left:382.00px;top:83.19px;font-size:11px;letter-spacing:-0.181px;">Ustawienia</span>
<span class="t" style="left:460.00px;top:83.19px;font-size:11px;letter-spacing:-0.395px;">Konsola</span>
<span class="t" style="left:520.00px;top:83.19px;font-size:11px;letter-spacing:-0.144px;">Tabele i mapy</span>
<span class="t" style="left:615.00px;top:83.19px;font-size:11px;letter-spacing:-0.067px;">Tabele i mapy</span>
<span class="t" style="left:711.00px;top:83.19px;font-size:11px;letter-spacing:-0.154px;">Wykresy</span>
<span class="t" style="left:777.00px;top:83.19px;font-size:11px;letter-spacing:0.298px;font-weight:bold;">Oxygen Sensors</span>
<span class="t" style="left:883.00px;top:83.19px;font-size:11px;letter-spacing:-0.210px;">Kody problemów</span>
<span class="t" style="left:119.40px;top:119.19px;font-size:11px;letter-spacing:-0.174px;">Read O2 Sensor Test Results</span>
<span class="t" style="left:19.40px;top:147.19px;font-size:11px;letter-spacing:-0.177px;">Oxygen Sensor Locations</span>
<span class="t" style="left:20.60px;top:164.19px;font-size:11px;letter-spacing:-0.296px;">Bank 1 Sensor 1</span>
<span class="t" style="left:104.70px;top:164.19px;font-size:11px;">-</span>
<span class="t" style="left:112.50px;top:164.19px;font-size:11px;letter-spacing:-0.146px;color:#0000ff;">Present</span>
<span class="t" style="left:210.60px;top:164.19px;font-size:11px;letter-spacing:-0.296px;">Bank 2 Sensor 1</span>
<span class="t" style="left:294.70px;top:164.19px;font-size:11px;">-</span>
<span class="t" style="left:302.20px;top:164.19px;font-size:11px;letter-spacing:-0.081px;color:#ff0000;">Not Present</span>
<span class="t" style="left:20.60px;top:182.19px;font-size:11px;letter-spacing:-0.296px;">Bank 1 Sensor 2</span>
<span class="t" style="left:104.70px;top:182.19px;font-size:11px;">-</span>
<span class="t" style="left:112.50px;top:182.19px;font-size:11px;letter-spacing:-0.146px;color:#0000ff;">Present</span>
<span class="t" style="left:210.60px;top:182.19px;font-size:11px;letter-spacing:-0.296px;">Bank 2 Sensor 2</span>
<span class="t" style="left:294.70px;top:182.19px;font-size:11px;">-</span>
<span class="t" style="left:302.20px;top:182.19px;font-size:11px;letter-spacing:-0.081px;color:#ff0000;">Not Present</span>
<span class="t" style="left:20.60px;top:200.19px;font-size:11px;letter-spacing:-0.296px;">Bank 1 Sensor 3</span>
<span class="t" style="left:104.70px;top:200.19px;font-size:11px;">-</span>
<span class="t" style="left:112.50px;top:200.19px;font-size:11px;letter-spacing:-0.109px;color:#ff0000;">Not Present</span>
<span class="t" style="left:210.60px;top:200.19px;font-size:11px;letter-spacing:-0.296px;">Bank 2 Sensor 3</span>
<span class="t" style="left:294.70px;top:200.19px;font-size:11px;">-</span>
<span class="t" style="left:302.20px;top:200.19px;font-size:11px;letter-spacing:-0.081px;color:#ff0000;">Not Present</span>
<span class="t" style="left:20.60px;top:218.19px;font-size:11px;letter-spacing:-0.296px;">Bank 1 Sensor 4</span>
<span class="t" style="left:104.70px;top:218.19px;font-size:11px;">-</span>
<span class="t" style="left:112.50px;top:218.19px;font-size:11px;letter-spacing:-0.109px;color:#ff0000;">Not Present</span>
<span class="t" style="left:210.60px;top:218.19px;font-size:11px;letter-spacing:-0.296px;">Bank 2 Sensor 4</span>
<span class="t" style="left:294.70px;top:218.19px;font-size:11px;">-</span>
<span class="t" style="left:302.20px;top:218.19px;font-size:11px;letter-spacing:-0.081px;color:#ff0000;">Not Present</span>
<span class="t" style="left:19.40px;top:246.19px;font-size:11px;letter-spacing:-0.197px;">Fuel System 1 Status</span>
<span class="t" style="left:204.40px;top:246.19px;font-size:11px;letter-spacing:-0.197px;">Fuel System 2 Status</span>
<span class="t" style="left:53.75px;top:268.19px;font-size:11px;letter-spacing:-0.178px;">Open Loop (Fault)</span>
<span class="t" style="left:260.60px;top:268.19px;font-size:11px;letter-spacing:-0.417px;">Nieznana</span>
<span class="t" style="left:385.60px;top:118.19px;font-size:11px;letter-spacing:-0.052px;">Oxygen Sensor:</span>
<span class="t" style="left:478.60px;top:118.19px;font-size:11px;letter-spacing:-0.296px;">Bank 1 Sensor 1</span>
<span class="t" style="left:394.20px;top:152.34px;letter-spacing:-0.421px;">Test ID</span>
<span class="t" style="left:444.20px;top:152.34px;letter-spacing:-0.297px;">Opis</span>
<span class="t" style="left:794.00px;top:152.34px;letter-spacing:-0.080px;">Wartość</span>
<span class="t" style="left:869.60px;top:152.34px;letter-spacing:0.447px;">Minimum</span>
<span class="t" style="left:944.50px;top:152.34px;letter-spacing:0.069px;">Maximum</span>
<span class="t" style="left:1019.00px;top:152.34px;letter-spacing:-0.533px;">Jedn...</span>
<span class="t" style="left:394.20px;top:174.34px;letter-spacing:-1.077px;">$01</span>
<span class="t" style="left:444.20px;top:174.34px;letter-spacing:-0.086px;">Rich to lean sensor threshold voltage (constant)</span>
<span class="t" style="left:794.00px;top:174.34px;letter-spacing:-0.566px;">0,130</span>
<span class="t" style="left:869.60px;top:174.34px;letter-spacing:-0.706px;">0,000</span>
<span class="t" style="left:944.50px;top:174.34px;letter-spacing:-0.806px;">1,275</span>
<span class="t" style="left:1019.00px;top:174.34px;">V</span>
<span class="t" style="left:394.20px;top:193.34px;letter-spacing:-1.077px;">$02</span>
<span class="t" style="left:444.20px;top:193.34px;letter-spacing:-0.073px;">Lean to rich sensor threshold voltage (constant)</span>
<span class="t" style="left:794.00px;top:193.34px;letter-spacing:-0.566px;">0,130</span>
<span class="t" style="left:869.60px;top:193.34px;letter-spacing:-0.706px;">0,000</span>
<span class="t" style="left:944.50px;top:193.34px;letter-spacing:-0.806px;">1,275</span>
<span class="t" style="left:1019.00px;top:193.34px;">V</span>
<span class="t" style="left:394.20px;top:212.34px;letter-spacing:-1.077px;">$03</span>
<span class="t" style="left:444.20px;top:212.34px;letter-spacing:-0.002px;">Low sensor voltage for switch time calculation (constant)</span>
<span class="t" style="left:794.00px;top:212.34px;letter-spacing:-0.566px;">0,130</span>
<span class="t" style="left:869.60px;top:212.34px;letter-spacing:-0.706px;">0,000</span>
<span class="t" style="left:944.50px;top:212.34px;letter-spacing:-0.806px;">1,275</span>
<span class="t" style="left:1019.00px;top:212.34px;">V</span>
<span class="t" style="left:394.20px;top:231.34px;letter-spacing:-1.077px;">$04</span>
<span class="t" style="left:444.20px;top:231.34px;letter-spacing:0.017px;">High sensor voltage for switch time calculation (constant)</span>
<span class="t" style="left:794.00px;top:231.34px;letter-spacing:-0.566px;">0,130</span>
<span class="t" style="left:869.60px;top:231.34px;letter-spacing:-0.706px;">0,000</span>
<span class="t" style="left:944.50px;top:231.34px;letter-spacing:-0.806px;">1,275</span>
<span class="t" style="left:1019.00px;top:231.34px;">V</span>
<span class="t" style="left:394.20px;top:250.34px;letter-spacing:-1.077px;">$05</span>
<span class="t" style="left:444.20px;top:250.34px;letter-spacing:-0.076px;">Rich to lean sensor switch time (calculated)</span>
<span class="t" style="left:794.00px;top:250.34px;letter-spacing:-0.566px;">0,104</span>
<span class="t" style="left:869.60px;top:250.34px;letter-spacing:-0.706px;">0,000</span>
<span class="t" style="left:944.50px;top:250.34px;letter-spacing:-0.806px;">0,000</span>
<span class="t" style="left:1019.00px;top:250.34px;">s</span>
<span class="t" style="left:394.20px;top:269.34px;letter-spacing:-1.077px;">$06</span>
<span class="t" style="left:444.20px;top:269.34px;letter-spacing:-0.062px;">Lean to rich sensor switch time (calculated)</span>
<span class="t" style="left:794.00px;top:269.34px;letter-spacing:-0.566px;">0,104</span>
<span class="t" style="left:869.60px;top:269.34px;letter-spacing:-0.706px;">0,000</span>
<span class="t" style="left:944.50px;top:269.34px;letter-spacing:-0.806px;">0,000</span>
<span class="t" style="left:1019.00px;top:269.34px;">s</span>
<span class="t" style="left:394.20px;top:288.34px;letter-spacing:-1.077px;">$07</span>
<span class="t" style="left:444.20px;top:288.34px;letter-spacing:0.006px;">Minimum sensor voltage for test cycle (calculated)</span>
<span class="t" style="left:794.00px;top:288.34px;letter-spacing:-0.566px;">0,130</span>
<span class="t" style="left:869.60px;top:288.34px;letter-spacing:-0.706px;">0,000</span>
<span class="t" style="left:944.50px;top:288.34px;letter-spacing:-0.806px;">0,000</span>
<span class="t" style="left:1019.00px;top:288.34px;">V</span>
<span class="t" style="left:394.20px;top:307.34px;letter-spacing:-1.077px;">$08</span>
<span class="t" style="left:444.20px;top:307.34px;letter-spacing:-0.037px;">Maximum sensor voltage for test cycle (calculated)</span>
<span class="t" style="left:794.00px;top:307.34px;letter-spacing:-0.566px;">0,130</span>
<span class="t" style="left:869.60px;top:307.34px;letter-spacing:-0.706px;">0,000</span>
<span class="t" style="left:944.50px;top:307.34px;letter-spacing:-0.806px;">0,000</span>
<span class="t" style="left:1019.00px;top:307.34px;">V</span>
<span class="t" style="left:394.20px;top:326.34px;letter-spacing:-1.077px;">$09</span>
<span class="t" style="left:444.20px;top:326.34px;letter-spacing:-0.074px;">Time between sensor transitions (calculated)</span>
<span class="t" style="left:794.00px;top:326.34px;letter-spacing:-0.566px;">1,040</span>
<span class="t" style="left:869.60px;top:326.34px;letter-spacing:-0.706px;">0,000</span>
<span class="t" style="left:944.50px;top:326.34px;letter-spacing:-0.806px;">0,000</span>
<span class="t" style="left:1019.00px;top:326.34px;">s</span>
<span class="t" style="left:394.20px;top:345.34px;letter-spacing:-0.486px;">$0A</span>
<span class="t" style="left:444.20px;top:345.34px;letter-spacing:-0.165px;">Sensor period (calculated)</span>
<span class="t" style="left:794.00px;top:345.34px;letter-spacing:-0.566px;">1,040</span>
<span class="t" style="left:869.60px;top:345.34px;letter-spacing:-0.706px;">0,000</span>
<span class="t" style="left:944.50px;top:345.34px;letter-spacing:-0.806px;">0,000</span>
<span class="t" style="left:1019.00px;top:345.34px;">s</span>
<span class="t" style="left:3.00px;top:643.69px;font-size:11px;letter-spacing:-0.148px;">Panel sterowania danymi</span>
<span class="t" style="left:12.50px;top:681.19px;font-size:11px;">0</span>
<span class="t" style="left:1260.50px;top:681.19px;font-size:11px;">0</span>
<span class="t c" style="left:459.40px;top:381.54px;letter-spacing:0.708px;transform-origin:0 12.16px;transform:scale(1.9005,0.9078);">Oxygen Sensor Output Example</span>
<span class="t c" style="left:111.30px;top:406.94px;letter-spacing:0.889px;transform-origin:0 12.16px;transform:scale(1.8438,0.9311);">Rich</span>
<span class="t c" style="left:109.40px;top:596.44px;letter-spacing:0.989px;transform-origin:0 12.16px;transform:scale(1.8200,0.9311);">Lean</span>
<span class="t c" style="left:44.70px;top:452.14px;letter-spacing:1.113px;transform-origin:0 12.16px;transform:scale(1.3052,0.5121);">$04</span>
<span class="t c" style="left:44.70px;top:536.44px;letter-spacing:1.113px;transform-origin:0 12.16px;transform:scale(1.3052,0.5121);">$03</span>
<span class="t c" style="left:264.50px;top:585.44px;letter-spacing:1.113px;transform-origin:0 12.16px;transform:scale(1.3479,0.5121);">$06</span>
<span class="t c" style="left:405.00px;top:585.44px;letter-spacing:1.113px;transform-origin:0 12.16px;transform:scale(1.3479,0.5121);">$05</span>
<span class="t c" style="left:576.00px;top:571.54px;letter-spacing:1.113px;transform-origin:0 12.16px;transform:scale(1.3254,0.5121);">$07</span>
<span class="t c" style="left:669.50px;top:585.44px;letter-spacing:1.187px;transform-origin:0 12.16px;transform:scale(1.3062,0.5121);">$0A</span>
<span class="t c" style="left:778.20px;top:496.84px;letter-spacing:1.113px;transform-origin:0 12.16px;transform:scale(1.3120,0.5121);">$02</span>
<span class="t c" style="left:1005.30px;top:417.14px;letter-spacing:1.113px;transform-origin:0 12.16px;transform:scale(1.3344,0.5121);">$08</span>
<span class="t c" style="left:1052.00px;top:491.64px;letter-spacing:1.113px;transform-origin:0 12.16px;transform:scale(1.1861,0.5121);">$01</span>
<span class="t c" style="left:914.00px;top:585.44px;letter-spacing:1.113px;transform-origin:0 12.16px;transform:scale(1.3479,0.5121);">$09</span>
</body></html>
